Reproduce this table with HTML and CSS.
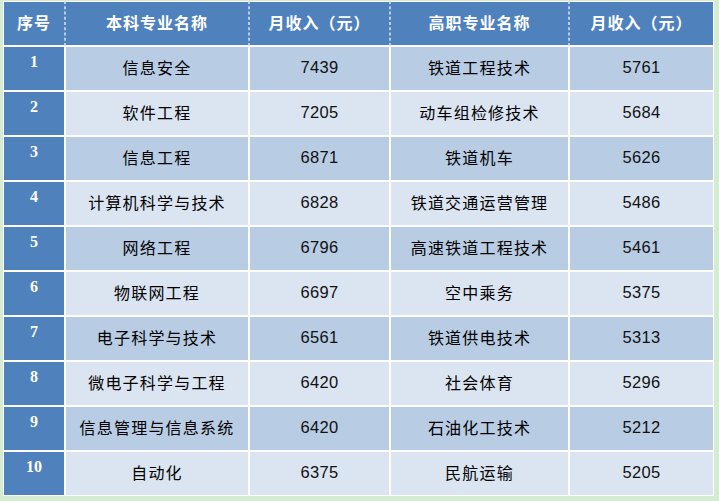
FILE: index.html
```html
<!DOCTYPE html>
<html lang="zh">
<head>
<meta charset="utf-8">
<title>月收入</title>
<link rel="stylesheet" href="styles.css">
</head>
<body>
<table class="tbl">
  <colgroup>
    <col class="c1"><col class="c2"><col class="c3"><col class="c4"><col class="c5">
  </colgroup>
  <thead>
    <tr>
      <th class="h first">序号</th>
      <th class="h">本科专业名称</th>
      <th class="h">月收入（元）</th>
      <th class="h">高职专业名称</th>
      <th class="h last">月收入（元）</th>
    </tr>
  </thead>
  <tbody>
    <tr class="odd"><td class="idx">1</td><td>信息安全</td><td class="num">7439</td><td>铁道工程技术</td><td class="num">5761</td></tr>
    <tr class="even"><td class="idx">2</td><td>软件工程</td><td class="num">7205</td><td>动车组检修技术</td><td class="num">5684</td></tr>
    <tr class="odd"><td class="idx">3</td><td>信息工程</td><td class="num">6871</td><td>铁道机车</td><td class="num">5626</td></tr>
    <tr class="even"><td class="idx">4</td><td>计算机科学与技术</td><td class="num">6828</td><td>铁道交通运营管理</td><td class="num">5486</td></tr>
    <tr class="odd"><td class="idx">5</td><td>网络工程</td><td class="num">6796</td><td>高速铁道工程技术</td><td class="num">5461</td></tr>
    <tr class="even"><td class="idx">6</td><td>物联网工程</td><td class="num">6697</td><td>空中乘务</td><td class="num">5375</td></tr>
    <tr class="odd"><td class="idx">7</td><td>电子科学与技术</td><td class="num">6561</td><td>铁道供电技术</td><td class="num">5313</td></tr>
    <tr class="even"><td class="idx">8</td><td>微电子科学与工程</td><td class="num">6420</td><td>社会体育</td><td class="num">5296</td></tr>
    <tr class="odd"><td class="idx">9</td><td>信息管理与信息系统</td><td class="num">6420</td><td>石油化工技术</td><td class="num">5212</td></tr>
    <tr class="even"><td class="idx">10</td><td>自动化</td><td class="num">6375</td><td>民航运输</td><td class="num">5205</td></tr>
  </tbody>
</table>
</body>
</html>
```

FILE: styles.css
```css
html, body {
  margin: 0;
  padding: 0;
  background: #d6ecd2;
}
body {
  padding: 1px 5px 4px 3px;
  width: 711px;
  font-family: "Noto Sans CJK SC", "Liberation Sans", sans-serif;
}
.tbl {
  border-collapse: separate;
  border-spacing: 0;
  table-layout: fixed;
  width: 711px;
}
.c1 { width: 62px; }
.c2 { width: 184px; }
.c3 { width: 141px; }
.c4 { width: 179px; }
.c5 { width: 145px; }

.tbl th, .tbl td {
  border: 1px solid #ffffff;
  padding: 0 0 3px 0;
  text-align: center;
  height: 43px;
  box-sizing: border-box;
}
.tbl tr { height: 45px; }

.h {
  background: #4f81bd;
  color: #ffffff;
  font-size: 16px;
  font-weight: bold;
  letter-spacing: 1px;
  border-left: 1px dashed #b8cce4 !important;
  border-right: 1px dashed #b8cce4 !important;
  border-top: 1px solid #ffffff !important;
  border-bottom: 1px solid #ffffff !important;
}
.h.first { border-left: 1px solid #ffffff !important; }
.h.last { border-right: 1px solid #ffffff !important; }

.tbl td {
  font-size: 16px;
  letter-spacing: 1.2px;
  color: #000000;
}
.odd td { background: #b8cce4; }
.even td { background: #dbe5f1; }

.tbl td.idx {
  background: #4f81bd;
  color: #ffffff;
  font-family: "Liberation Serif", serif;
  font-weight: bold;
  font-size: 16px;
  letter-spacing: 0;
  vertical-align: top;
  padding: 6px 0 0 0;
}
.tbl td.num {
  font-family: "Liberation Sans", sans-serif;
  font-size: 16.5px;
  letter-spacing: 0.3px;
  color: #111111;
}
```
